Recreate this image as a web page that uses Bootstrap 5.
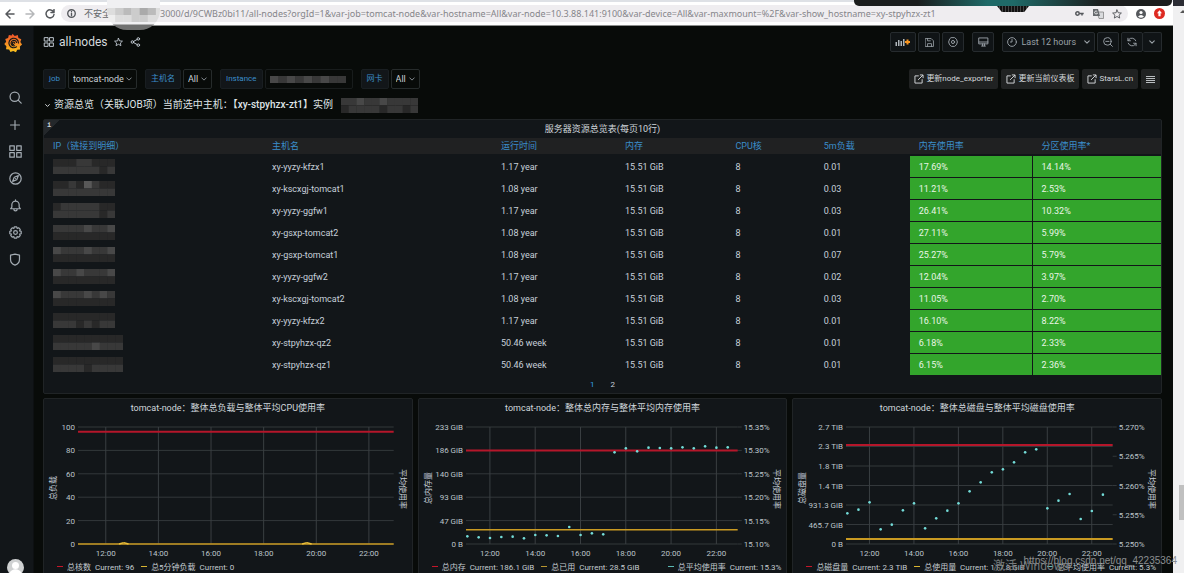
<!DOCTYPE html>
<html lang="zh-CN" data-bs-theme="dark">
<head>
<meta charset="utf-8">
<meta name="viewport" content="width=device-width, initial-scale=1">
<title>all-nodes - Grafana</title>
<link href="https://cdn.jsdelivr.net/npm/bootstrap@5.3.0/dist/css/bootstrap.min.css" rel="stylesheet">
<style>
:root{--ink:#c7d0d9;--panel:#121619;--line:#202426;--blue:#3b8ecb;--cjk:"Noto Sans CJK SC"}
body{font:9px/14px Roboto,var(--cjk),sans-serif;color:var(--ink);background:#080b09}
svg{display:block;flex:none}
.ic{fill:none;stroke:currentColor;stroke-width:1.5;stroke-linecap:round;stroke-linejoin:round}
button{color:inherit}
/* browser chrome */
.chrome{height:26px;background:#fff;border-top:2px solid #dee1e6;border-bottom:1px solid #8b8d8c;color:#55585c;padding:0 8px 0 3px}
.chrome button{background:none;border:0;padding:0;width:14px;display:grid;place-items:center}
.omni{height:17px;border-radius:9px;background:#efedf0;margin-left:4px;padding:0 6px}
.omni label{font-size:9px;color:#66696d;white-space:nowrap;width:80px}
.omni input{background:none;border:0;outline:0;padding:0;min-width:0;font:9px/17px "Noto Sans",var(--cjk),sans-serif;color:#85858a}
.bubble{left:107px;top:0;width:53px;height:30px;border-radius:0 0 20px 20px;overflow:hidden;background:linear-gradient(#f0f0f2 24px,#707170 25px)}
.callbar{right:12px;top:0;width:318px;height:6px;border-radius:0 0 5px 5px;background:linear-gradient(90deg,#1b1d1d 20%,#1f6a68 42%,#1f6a68 50%,#1b1d1d 78%)}
.callgrip{right:155px;top:6px;width:32px;height:6px;background:repeating-linear-gradient(90deg,#111 0 2px,#444 2px 3px);clip-path:polygon(0 0,100% 0,85% 100%,15% 100%)}
/* outer scrollbar */
.rail{width:11px;background:#f0f0f1;border-top:6px solid #2b2c34}
.rail i{display:block;width:5px;height:35px;background:#c0c0c0;margin-top:auto;margin-bottom:53px;align-self:flex-end}
/* side menu */
.side{width:34px;background:var(--panel);border-right:1px solid #0d1012;padding:7px 3px 0 0;color:#a3abb2}
.side a{color:inherit;height:27px;display:grid;place-items:center;flex:none}
.side .brand{height:18px;margin:0 3px 33px 0;width:27px}
.avatar{width:17px;height:17px;border-radius:50%;background:#cfd1d2;margin-bottom:-3px;overflow:hidden}
main{padding:6px 11px 0 9px}
h1{font-size:12px;line-height:20px;color:#d5dade;margin:0}
.head-ic{margin-left:7px}
.tool{height:20px;min-width:22px;border:1px solid #262b2e;background:#101416;border-radius:2px;padding:0 4px;display:flex;align-items:center;justify-content:center;color:#9aa1a7;font-size:9px}
.gap-l{margin-left:6px}
.vars{margin-top:17px}
.tag{height:20px;line-height:18px;font-size:8px;padding:0 5px;border:1px solid #191e21;background:#121619;color:var(--blue);border-radius:2px;white-space:nowrap;margin-right:2px}
.pick{height:20px;line-height:18px;font-size:9px;width:auto;padding:0 12px 0 4px;border:1px solid #262b2b;border-radius:2px;background-color:#080b09;color:#c9d0d5;background-position:right 4px center;background-size:6px 6px}
.pick option{background:#121619}
.jump{height:20px;line-height:20px;font-size:8px;padding:0 5px;background:#202222;color:#d5d9dc;border-radius:2px;border:0;text-decoration:none;display:flex;align-items:center;gap:2px;white-space:nowrap}
.secret{width:88px;height:20px;border:1px solid #181c1c;border-radius:2px;padding-left:4px}
.rowhead{font-size:10px;line-height:16px;color:#dfe3e6;height:16px;margin:8px 0 6px;padding-left:2px}
.panelbox{background:var(--panel);border:1px solid var(--line);border-radius:2px}
.ptitle{font-size:9px;line-height:18px;text-align:center;color:#d0d7dc;margin:0;font-weight:400}
.corner{left:0;top:0;width:16px;height:16px;background:linear-gradient(135deg,#24282b 50%,transparent 50%);font:bold 7px/11px "Liberation Mono",monospace;padding-left:3px}
.nodes{table-layout:fixed;width:100%;border-collapse:separate;border-spacing:0}
.nodes th{height:16px;line-height:16px;padding:0 0 0 9px;background:#202122;color:var(--blue);font-weight:400;white-space:nowrap}
.nodes td{height:22px;line-height:20px;padding:0 0 0 9px;border:solid var(--panel);border-width:0 0 1px;white-space:nowrap;background-clip:padding-box}
.nodes td.ok{background-color:#33a52c;color:#e9f5e6;border-right-width:1px}
.nodes tbody:before{content:"";display:block;height:2px}
.pages{height:17px;gap:12px}
.pages button{border:0;background:none;padding:0 2px;line-height:16px;font-size:8px}
.plotrow{height:145px;padding-top:10px}
.plot{height:117px;width:100%;overflow:visible}
.plot text{font-size:8px;fill:#bcc4ca}
.vert{writing-mode:vertical-rl;text-orientation:sideways;font-size:8px;line-height:12px;width:12px;text-align:center;height:127px}
.vert.up{transform:rotate(180deg)}
.keys{font-size:8px;line-height:12px;height:16px;white-space:nowrap;gap:7px;color:#c3cbd0;padding:0 5px 0 13px}
.keys b{display:inline-block;width:6px;height:1px;margin-right:4px;vertical-align:3px}
.mark-url{right:7px;bottom:5px;font:10px/14px "Liberation Sans",sans-serif;color:#8b8e90}
.mark-win{right:115px;bottom:-2px;font:12px/18px Roboto,var(--cjk),sans-serif;color:#75797b}
</style>
</head>
<body>
<div class="d-flex vh-100 overflow-hidden position-relative">
 <div class="d-flex flex-column flex-grow-1" style="min-width:0">
  <header class="chrome d-flex align-items-center flex-shrink-0">
   <button aria-label="后退"><svg class="ic" width="10" height="10" viewBox="0 0 10 10" stroke-width="1.3"><path d="M9 5H1M5 1 1 5l4 4"/></svg></button>
   <button aria-label="前进" class="mx-1 px-1" style="color:#b5b7b9"><svg class="ic" width="10" height="10" viewBox="0 0 10 10"><path d="M1 5h8M5 1l4 4-4 4"/></svg></button>
   <button aria-label="刷新" class="ms-1"><svg class="ic" width="10" height="10" viewBox="0 0 10 10"><path d="M8.6 3A4 4 0 1 0 9 5.5M9 .6v2.9H6"/></svg></button>
   <div class="omni d-flex align-items-center flex-grow-1">
    <svg class="ic me-1" width="9" height="9" viewBox="0 0 10 10" stroke-width="1"><circle cx="5" cy="5" r="4.2"/><path d="M5 4.6v2.6M5 2.8v.1"/></svg>
    <label for="addr" class="ps-1">不安全</label>
    <input id="addr" class="flex-grow-1" value="3000/d/9CWBz0bi11/all-nodes?orgId=1&amp;var-job=tomcat-node&amp;var-hostname=All&amp;var-node=10.3.88.141:9100&amp;var-device=All&amp;var-maxmount=%2F&amp;var-show_hostname=xy-stpyhzx-zt1">
    <svg width="9" height="9" viewBox="0 0 9 9" fill="none" stroke="#55585c" stroke-width="1.5"><circle cx="2.5" cy="4.5" r="1.7"/><path d="M4.2 4.5h4.5M7 4.5v2"/></svg>
    <svg class="mx-2" width="12" height="10" viewBox="-1 0 12 10"><path d="M4 3h6.500v6.500H6z" fill="#d9dadd" stroke="#777" stroke-width=".7"/><path d="M0 0h5l2 7H0z" fill="#66696d"/><path d="M4.200 2.500A1.500 1.500 0 1 0 4.500 4H3.500" fill="none" stroke="#fff" stroke-width=".8"/></svg>
    <svg class="ic" width="10" height="10" viewBox="0 0 16 16"><path d="m8 1.500 2 4.500 5 .5-3.700 3.300 1 4.700L8 12l-4.300 2.500 1-4.700L1 6.500 6 6z"/></svg>
   </div>
   <svg class="ms-2" width="10" height="10" viewBox="0 0 10 10"><circle cx="5" cy="5" r="5" fill="#55585c"/><circle cx="5" cy="3.500" r="1.600" fill="#fff"/><path d="M2 7.500Q5 4.500 8 7.500 5 10 2 7.500" fill="#fff"/></svg>
   <svg class="ms-2" width="11" height="11" viewBox="0 0 10 10"><circle cx="5" cy="5" r="5" fill="#de2b22"/><path d="M5 2 7.300 4.700H6V7.500H4V4.700H2.700z" fill="#fff"/></svg>
  </header>

  <div class="d-flex flex-grow-1" style="min-height:0">
   <nav class="side d-flex flex-column align-items-center" aria-label="主菜单">
    <a href="#" class="brand" aria-label="Grafana"><svg width="19" height="20" viewBox="0 0 20 21"><defs><linearGradient id="gl" x1="0" y1="0" x2="0" y2="1"><stop stop-color="#ee4e2b"/><stop offset="1" stop-color="#fcc51c"/></linearGradient></defs><path fill="url(#gl)" d="m9 .8 2.300 2.200 3.200-.8.7 3 3 1.400-1 2.900 1.800 2.700-2.300 1.900.2 3.200-3 .3-1.300 2.700-2.900-1.300L6.800 20l-1.400-2.700-3.200-.2.3-3.100L.3 11.600l2-2.300-1-3 3-1.100.8-3.200 3 .6z"/><path d="M15.200 10.500a5 5 0 1 0-2 4M13.200 10a2.900 2.900 0 1 0-2 3.400M11.200 10.700a1.200 1.200 0 1 0-1 1.300" fill="none" stroke="#14171a" stroke-width="1.200" stroke-linecap="round"/></svg></a>
    <a href="#" aria-label="搜索"><svg class="ic" width="13" height="13" viewBox="0 0 16 16"><circle cx="7" cy="7" r="5.700"/><path d="m11.300 11.300 3.700 3.700"/></svg></a>
    <a href="#" aria-label="新建"><svg class="ic" width="12" height="12" viewBox="0 0 16 16"><path d="M8 2v12M2 8h12"/></svg></a>
    <a href="#" aria-label="仪表板"><svg class="ic" width="13" height="13" viewBox="0 0 16 16"><path d="M1 1h5.500v5.500H1zM9.500 1H15v5.500H9.500zM1 9.500h5.500V15H1zM9.500 9.500H15V15H9.500z"/></svg></a>
    <a href="#" aria-label="探索"><svg class="ic" width="13" height="13" viewBox="0 0 16 16"><circle cx="8" cy="8" r="7"/><path d="m11.500 4.500-2 5-5 2 2-5zM8 8v.1"/></svg></a>
    <a href="#" aria-label="告警"><svg class="ic" width="13" height="13" viewBox="0 0 16 16"><path d="M8 1v1.500M3.500 10V7a4.500 4.500 0 0 1 9 0v3l1.500 2H2zM6 12.500a2 2 0 0 0 4 0"/></svg></a>
    <a href="#" aria-label="配置"><svg class="ic" width="13" height="13" viewBox="0 0 16 16"><path d="m6.500 1h3l.5 2 1.800-.8 2 2L13 6l2 .5v3l-2 .5.800 1.800-2 2L10 13l-.5 2h-3L6 13l-1.800.8-2-2L3 10l-2-.5v-3L3 6l-.8-1.800 2-2L6 3z"/><circle cx="8" cy="8" r="2.300"/></svg></a>
    <a href="#" aria-label="管理"><svg class="ic" width="12" height="13" viewBox="0 0 14 16"><path d="M7 1.500 12.500 2.500V8c0 4-3 6-5.500 7-2.500-1-5.500-3-5.500-7V2.500z"/></svg></a>
    <div class="avatar mt-auto flex-shrink-0"><svg width="17" height="17" viewBox="0 0 17 17" fill="#fff"><circle cx="8.500" cy="6.500" r="3.500"/><path d="M2 17c0-9 13-9 13 0z"/></svg></div>
   </nav>

   <main class="flex-grow-1" style="min-width:0">
    <div class="d-flex align-items-center">
     <svg class="ic me-1" width="12" height="10" viewBox="0 0 16 16"><path d="M1 1h5.500v5.500H1zM9.500 1H15v5.500H9.500zM1 9.500h5.500V15H1zM9.500 9.500H15V15H9.500z"/></svg>
     <h1 class="fw-normal">all-nodes</h1>
     <svg class="ic head-ic" width="9" height="10" viewBox="0 0 16 16"><path d="m8 1.500 2 4.500 5 .5-3.700 3.300 1 4.700L8 12l-4.300 2.500 1-4.700L1 6.500 6 6z"/></svg>
     <svg class="ic head-ic" width="11" height="10" viewBox="0 0 16 16"><circle cx="3" cy="8" r="2"/><circle cx="12.500" cy="3" r="2"/><circle cx="12.500" cy="13" r="2"/><path d="m5 7 5.500-3M5 9l5.500 3"/></svg>
     <div class="ms-auto d-flex" style="gap:2px">
      <button class="tool" aria-label="添加面板"><svg width="16" height="10" viewBox="0 0 15 10"><path d="M0 5h1.500v4H0zM2.500 3H4v6H2.500zM5 4h1.500v5H5zM7.500 2H9v7H7.500z" fill="#aeb5ba"/><path d="M12 2.500v5M9.500 5h5" stroke="#f79520" stroke-width="2"/></svg></button>
      <button class="tool" aria-label="保存"><svg class="ic" width="9" height="9" viewBox="0 0 16 16"><path d="M1 1h10l4 4v10H1zM4.500 1v4h5M4.500 15v-5h7v5"/></svg></button>
      <button class="tool" aria-label="设置"><svg class="ic" width="10" height="10" viewBox="0 0 16 16"><path d="M5.500 1h5l3 2.500L15 8l-1.500 4.500-3 2.500h-5l-3-2.500L1 8l1.500-4.500z"/><circle cx="8" cy="8" r="2.500"/></svg></button>
      <button class="tool gap-l" aria-label="循环视图"><svg class="ic" width="11" height="10" viewBox="0 0 16 16"><path d="M1 1.500h14v9.500H1zM1 8h14M5 14.500h6M6.500 11v3M9.500 11v3"/></svg></button>
      <button class="tool gap-l"><svg class="ic me-1" width="10" height="10" viewBox="0 0 16 16"><circle cx="8" cy="8" r="7"/><path d="M8 4v4H5.500"/></svg>Last 12 hours<svg class="ic ms-2" width="6" height="6" viewBox="0 0 8 8"><path d="m1 2.500 3 3 3-3"/></svg></button>
      <button class="tool" aria-label="缩小"><svg class="ic" width="10" height="10" viewBox="0 0 16 16"><circle cx="7" cy="7" r="6"/><path d="m11.500 11.500 3.500 3.500M4.500 7h5"/></svg></button>
      <div class="d-flex"><button class="tool" aria-label="刷新"><svg class="ic" width="10" height="10" viewBox="0 0 16 16"><path d="M14 6A6.500 6.500 0 0 0 3 4L1.500 6M1.500 2v4h4M2 10a6.500 6.500 0 0 0 11 2l1.500-2M14.500 14v-4h-4"/></svg></button><button class="tool border-start-0" style="min-width:19px" aria-label="刷新间隔"><svg class="ic" width="6" height="6" viewBox="0 0 8 8"><path d="m1 2.500 3 3 3-3"/></svg></button></div>
     </div>
    </div>

    <div class="vars d-flex align-items-center">
     <label class="tag" for="vjob">job</label><select id="vjob" class="form-select pick me-2"><option>tomcat-node</option></select>
     <label class="tag" for="vhost">主机名</label><select id="vhost" class="form-select pick me-2"><option>All</option></select>
     <label class="tag" for="vinst">Instance</label><button id="vinst" class="secret bg-transparent me-2" aria-label="Instance"><svg class="mosaic" data-c="434343433" data-d="" width="76" height="7"></svg></button>
     <label class="tag" for="vdev">网卡</label><select id="vdev" class="form-select pick"><option>All</option></select>
     <div class="ms-auto d-flex" style="gap:3px;padding-right:2px">
      <a class="jump" href="#"><svg class="ic" width="10" height="10" viewBox="0 0 16 16"><path d="M7 3H1.500v11.500H13V9M10 1.500h4.500V6M14 2 7 9"/></svg>更新node_exporter</a>
      <a class="jump" href="#"><svg class="ic" width="10" height="10" viewBox="0 0 16 16"><path d="M7 3H1.500v11.500H13V9M10 1.500h4.500V6M14 2 7 9"/></svg>更新当前仪表板</a>
      <a class="jump" href="#"><svg class="ic" width="10" height="10" viewBox="0 0 16 16"><path d="M7 3H1.500v11.500H13V9M10 1.500h4.500V6M14 2 7 9"/></svg>StarsL.cn</a>
      <button class="jump" aria-label="菜单"><svg width="9" height="8" viewBox="0 0 9 8" stroke="#b9bdc0" stroke-width="1"><path d="M0 1.500h9M0 3.500h9M0 5.500h9M0 7.500h9"/></svg></button>
     </div>
    </div>

    <div class="rowhead d-flex align-items-center"><svg class="ic me-1" width="5" height="5" viewBox="0 0 8 8"><path d="m1 2.500 3 3 3-3"/></svg><span>资源总览（关联JOB项）当前选中主机：<b class="fw-medium">【xy-stpyhzx-zt1】</b>实例</span><svg class="mosaic ms-2" data-c="3343343333" data-d="2333323323" width="77" height="15"></svg></div>

    <section class="panelbox position-relative">
     <span class="corner position-absolute">i</span>
     <h2 class="ptitle">服务器资源总览表(每页10行)</h2>
     <table class="nodes">
      <colgroup><col style="width:19.6%"><col style="width:20.5%"><col style="width:11.1%"><col style="width:9.900%"><col style="width:7.900%"><col style="width:8.500%"><col style="width:11%"><col></colgroup>
      <thead><tr><th>IP（链接到明细）</th><th>主机名</th><th>运行时间</th><th>内存</th><th>CPU核</th><th>5m负载</th><th>内存使用率</th><th>分区使用率*</th></tr></thead>
      <tbody id="rows"></tbody>
     </table>
     <div class="pages d-flex justify-content-center align-items-center"><button style="color:#33a2e5">1</button><button>2</button></div>
    </section>

    <div class="d-flex mt-1" style="gap:5px" id="charts"></div>
   </main>
  </div>
 </div>
 <div class="rail d-flex flex-column flex-shrink-0"><svg class="ms-auto mt-1" width="4" height="4" viewBox="0 0 4 4"><path d="M0 3 3 0l3 3z" fill="#555"/></svg><i></i></div>

 <div class="bubble position-absolute"><svg class="mosaic mt-2" data-c="dcbcabd" data-d="eddccdd" width="57" height="14"></svg></div>
 <div class="callbar position-absolute"></div><div class="callgrip position-absolute"></div>
 <div class="mark-win position-absolute">激活 Windows</div>
 <div class="mark-url position-absolute">https://blog.csdn.net/qq_42235364</div>
</div>

<script src="https://cdn.jsdelivr.net/npm/bootstrap@5.3.0/dist/js/bootstrap.bundle.min.js"></script>
<script>
// Mosaic blocks: one hex digit of grey per block, in one or two rows.
function blocks(c, d) {
  const lines = d ? [c, d] : [c];
  return lines.map((l, r) => [...l].map((g, i) =>
    `<rect x="${i * 100 / l.length}%" y="${r * 100 / lines.length}%" width="${100 / l.length + .5}%" height="${100 / lines.length}%" fill="#${(g + (g > '9' ? g : '8')).repeat(3)}"/>`).join('')).join('');
}
document.querySelectorAll('.mosaic').forEach(s => s.innerHTML = blocks(s.dataset.c, s.dataset.d));

const data = [
 ['22233222','33333323','xy-yyzy-kfzx1','1.17 year','0.01','17.69%','14.14%'],
 ['22325322','33333333','xy-kscxgj-tomcat1','1.08 year','0.03','11.21%','2.53%'],
 ['23333322','33333323','xy-yyzy-ggfw1','1.17 year','0.03','26.41%','10.32%'],
 ['33334334','22222222','xy-gsxp-tomcat2','1.08 year','0.01','27.11%','5.99%'],
 ['43334334','22222222','xy-gsxp-tomcat1','1.08 year','0.07','25.27%','5.79%'],
 ['43343334','22222222','xy-yyzy-ggfw2','1.17 year','0.02','12.04%','3.97%'],
 ['43334343','22222222','xy-kscxgj-tomcat2','1.08 year','0.03','11.05%','2.70%'],
 ['22222222','33323233','xy-yyzy-kfzx2','1.17 year','0.01','16.10%','8.22%'],
 ['222222222','333334333','xy-stpyhzx-qz2','50.46 week','0.01','6.18%','2.33%'],
 ['222222222','333323333','xy-stpyhzx-qz1','50.46 week','0.01','6.15%','2.36%']];
document.getElementById('rows').innerHTML = data.map(([a, b, n, t, l, m, p]) =>
 `<tr><td><svg width="${a.length > 8 ? 70 : 62}" height="15">${blocks(a, b)}</svg></td><td>${n}</td><td>${t}</td><td>15.51 GiB</td><td>8</td><td>${l}</td><td class="ok">${m}</td><td class="ok border-end-0">${p}</td></tr>`).join('');

const charts = [
 {title:'整体总负载与整体平均CPU使用率', ml:34, mr:18, left:['100','80','60','40','20','0'], right:[], yt:'总负载', x0:8.8,
  red:4, yel:100, bumps:[14.5,72.5], dots:[], dx:0,
  keys:[['#c4162a','总核数','96'],['#d9b531','总5分钟负载','0']]},
 {title:'整体总内存与整体平均内存使用率', ml:47, mr:49, left:['233 GiB','186 GiB','140 GiB','93 GiB','47 GiB','0 B'], right:['15.35%','15.30%','15.25%','15.20%','15.15%','15.10%'], yt:'总内存量', x0:8.8,
  red:20, yel:87.8, bumps:[], dx:.5,
  dots:[439,442,444,441,440,445,435,436,438,411,435,430,433,187,175,184,173,174,175,172,175,169,173,172],
  keys:[['#c4162a','总内存','186.1 GiB'],['#b9962f','总已用','28.5 GiB'],['#5bb9b5','总平均使用率','15.3%']]},
 {title:'整体总磁盘与整体平均磁盘使用率', ml:53, mr:48, left:['2.7 TiB','2.3 TiB','1.8 TiB','1.4 TiB','931.3 GiB','465.7 GiB','0 B'], right:['5.270%','5.265%','5.260%','5.255%','5.250%'], yt:'总磁盘量', x0:8.8,
  red:15.4, yel:95.8, bumps:[], dx:.5, thick:2,
  dots:[370,359,337,418,404,361,340,415,385,362,340,304,277,247,238,217,187,178,355,332,312,387,363,314],
  keys:[['#c4162a','总磁盘量','2.3 TiB'],['#d9b531','总使用量','117.8 GiB'],['#5bb9b5','总平均使用率','5.3%']]}];
document.getElementById('charts').innerHTML = charts.map(c => {
 let s = '';
 const ln = (x1, y1, x2, y2, col, w) => s += `<line x1="${x1}%" y1="${y1}%" x2="${x2}%" y2="${y2}%" stroke="${col}" stroke-width="${w}"/>`;
 c.left.forEach((t, i) => { const y = i * 100 / (c.left.length - 1); ln(0, y, 100, y, '#33383b', 1); s += `<text x="-3" y="${y}%" dy="3" text-anchor="end">${t}</text>`; });
 c.right.forEach((t, i) => { const y = i * 100 / (c.right.length - 1); ln(100, y, 101.5, y, '#33383b', 1); s += `<svg x="100%" y="${y}%" overflow="visible"><text x="6" y="3">${t}</text></svg>`; });
 for (let i = 0; i < 6; i++) { const x = c.x0 + i * 16.67; ln(x, 0, x, 100, '#3a3f42', 1); s += `<text x="${x}%" y="100%" dy="12" text-anchor="middle">${12 + 2 * i}:00</text>`; }
 ln(0, c.red, 100, c.red, '#b5162a', c.thick || 2);
 ln(0, c.yel, 100, c.yel, '#c99a22', c.thick || 1.5);
 c.bumps.forEach(b => { ln(b - 1.5, 100, b, 98.8, '#ecc03a', 1.5); ln(b, 98.8, b + 1.5, 100, '#ecc03a', 1.5); });
 c.dots.forEach((v, i) => s += `<circle cx="${c.dx + i * 4.167}%" cy="${(v - 111) / 3.51}%" r="1.3" fill="#73dcd8"/>`);
 const key = ([col, n, v], i) => `<span class="${i == 2 ? 'ms-auto' : ''}"><b style="background:${col}"></b>${n}&nbsp; Current: ${v}</span>`;
 return `<section class="panelbox position-relative" style="flex:1 1 0;min-width:0"><h2 class="ptitle">tomcat-node：${c.title}</h2>
 <div class="plotrow position-relative" style="padding-left:${c.ml}px;padding-right:${c.mr}px"><svg class="plot">${s}</svg>
 <span class="vert up position-absolute start-0 top-0 mt-2 ms-1">${c.yt}</span><span class="vert position-absolute end-0 top-0 mt-2 me-1">平均使用率</span></div>
 <div class="keys d-flex">${c.keys.map(key).join('')}</div></section>`;
}).join('');
</script>
</body>
</html>
